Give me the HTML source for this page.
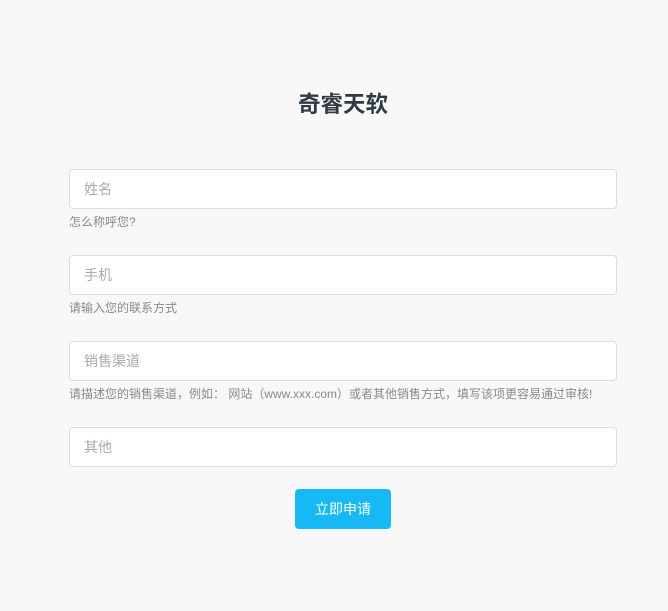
<!DOCTYPE html>
<html><head><meta charset="utf-8"><style>
*{margin:0;padding:0;box-sizing:border-box}
body{width:668px;height:611px;background:#f8f8f8;font-family:"Liberation Sans","Noto Sans CJK SC",sans-serif;position:relative;overflow:hidden}
h1{position:absolute;left:0;width:686px;top:87px;text-align:center;font-size:22.5px;font-weight:bold;color:#2f3a45}
.in{position:absolute;left:69px;width:548px;height:40px;background:#fff;border:1px solid #dcdde3;border-radius:4px;padding-left:14px;line-height:38px;font-size:14px;color:#a9a9a9}
.h{position:absolute;left:69px;font-size:12px;color:#8a8a8a;line-height:14px}
.btn{position:absolute;left:295px;top:489px;width:96px;height:40px;background:#16b9f3;border-radius:4px;color:#fff;font-size:14px;text-align:center;line-height:40px}
</style></head><body>
<h1>奇睿天软</h1>
<div class="in" style="top:169px">姓名</div>
<div class="h" style="top:215px">怎么称呼您?</div>
<div class="in" style="top:255px">手机</div>
<div class="h" style="top:301px">请输入您的联系方式</div>
<div class="in" style="top:341px">销售渠道</div>
<div class="h" style="top:387px">请描述您的销售渠道，例如： 网站（www.xxx.com）或者其他销售方式，填写该项更容易通过审核!</div>
<div class="in" style="top:427px">其他</div>
<div class="btn">立即申请</div>
</body></html>
